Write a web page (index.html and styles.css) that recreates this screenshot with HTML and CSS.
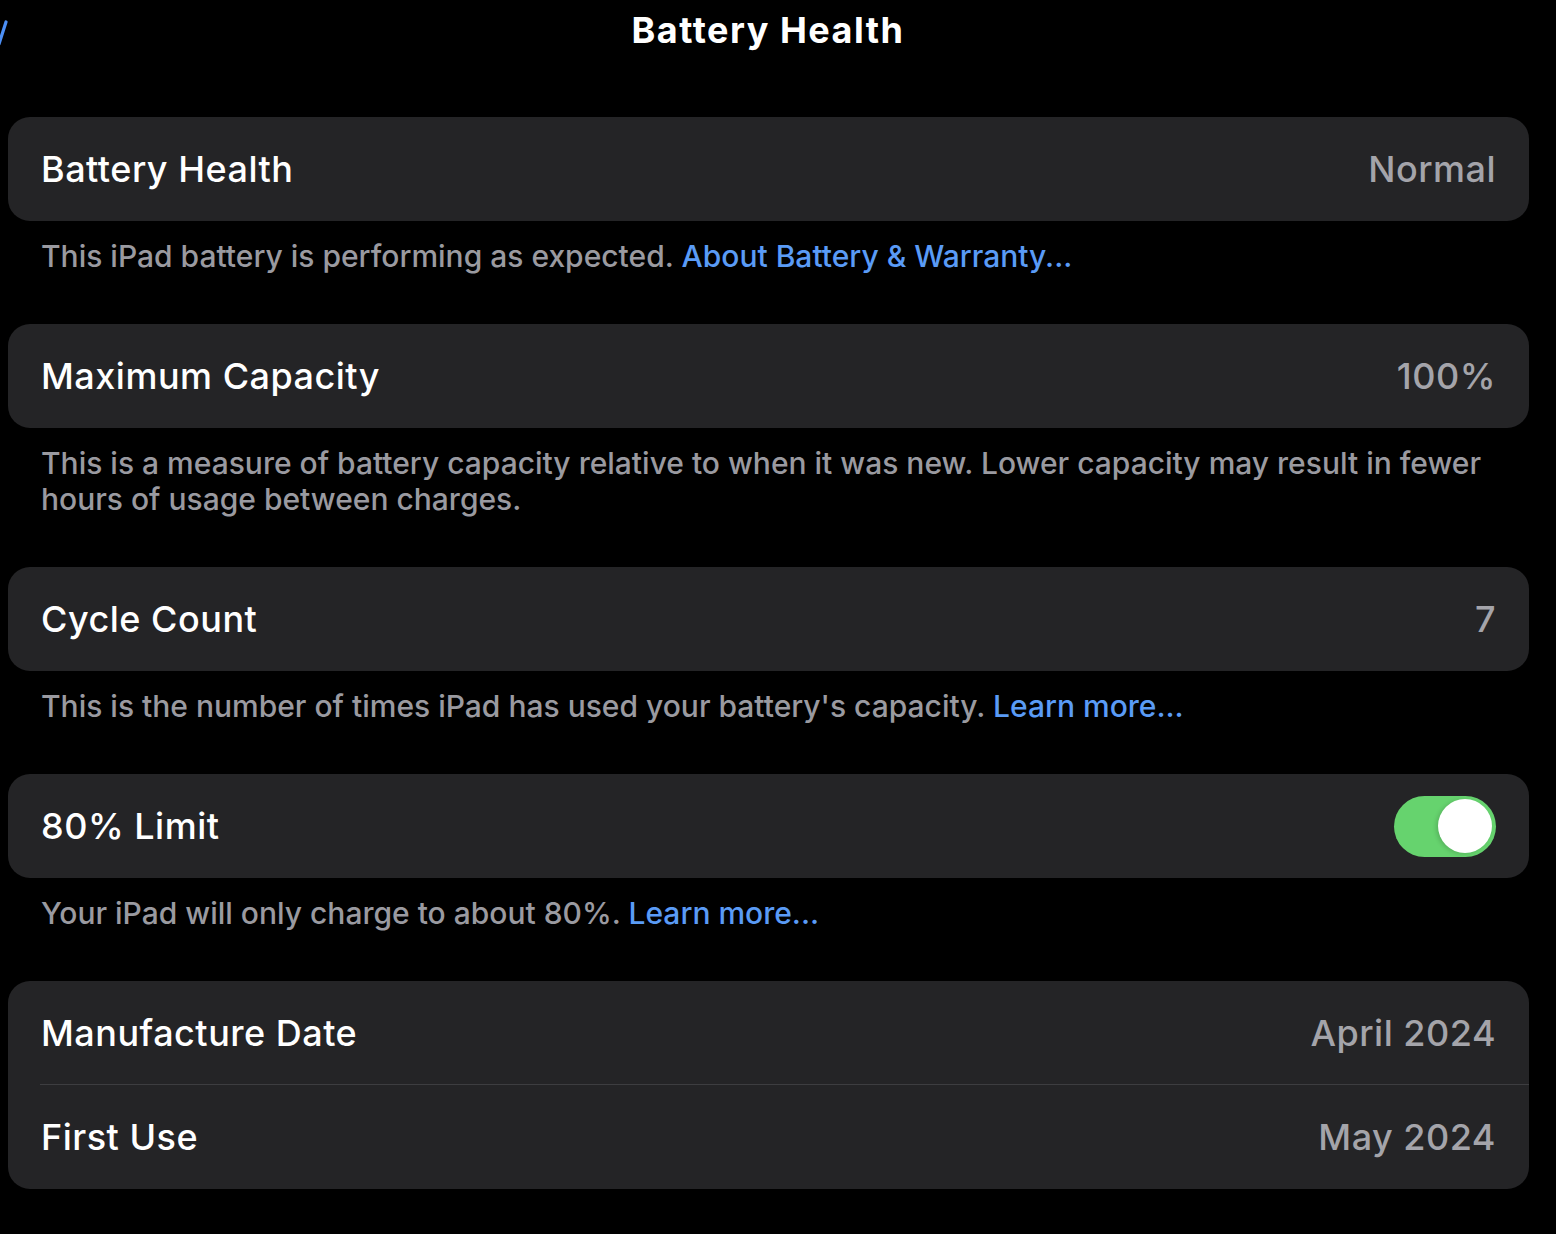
FILE: index.html
```html
<!DOCTYPE html>
<html lang="en">
<head>
  <meta charset="UTF-8">
  <title>Battery Health</title>
  <link rel="stylesheet" href="styles.css">
</head>
<body>

  <div class="barra-topo">
    <div class="voltar">
      <svg width="10" height="26" viewBox="0 0 10 26"><path d="M8 2 L1 24" stroke="#4c8ff5" stroke-width="3.2" stroke-linecap="round" fill="none"/></svg>
    </div>
    <h1>Battery Health</h1>
    <div></div>
  </div>

  <div class="conteudo">
    <div class="grupo">
      <div class="linha">
        <span class="rotulo">Battery Health</span>
        <span class="valor">Normal</span>
      </div>
    </div>
    <p class="rodape">This iPad battery is performing as expected. <a href="#">About Battery &amp; Warranty...</a></p>

    <div class="grupo">
      <div class="linha">
        <span class="rotulo">Maximum Capacity</span>
        <span class="valor">100%</span>
      </div>
    </div>
    <p class="rodape">This is a measure of battery capacity relative to when it was new. Lower capacity may result in fewer hours of usage between charges.</p>

    <div class="grupo">
      <div class="linha">
        <span class="rotulo">Cycle Count</span>
        <span class="valor">7</span>
      </div>
    </div>
    <p class="rodape">This is the number of times iPad has used your battery's capacity. <a href="#">Learn more...</a></p>

    <div class="grupo">
      <div class="linha">
        <span class="rotulo">80% Limit</span>
        <span class="chave ligada"><span class="bolinha"></span></span>
      </div>
    </div>
    <p class="rodape">Your iPad will only charge to about 80%. <a href="#">Learn more...</a></p>

    <div class="grupo">
      <div class="linha">
        <span class="rotulo">Manufacture Date</span>
        <span class="valor">April 2024</span>
      </div>
      <div class="linha">
        <span class="rotulo">First Use</span>
        <span class="valor">May 2024</span>
      </div>
    </div>
  </div>

</body>
</html>
```

FILE: styles.css
```css
* {
  box-sizing: border-box;
  margin: 0;
  padding: 0;
}

body {
  background-color: #000;
  color: #fff;
  font-family: Inter, "Noto Sans", sans-serif;
  width: 1556px;
  min-height: 1234px;
}

.barra-topo {
  display: grid;
  grid-template-columns: 1fr auto 1fr;
  align-items: center;
  width: 1536px;
  height: 117px;
  padding-bottom: 58px;
}

.barra-topo h1 {
  font-size: 36px;
  font-weight: 700;
  letter-spacing: 1.5px;
}

.voltar svg {
  display: block;
  margin-left: -2px;
  margin-top: 6px;
}

.conteudo {
  padding: 0 27px 0 8px;
}

.grupo {
  background-color: #242426;
  border-radius: 22px;
  overflow: hidden;
}

.linha {
  display: flex;
  align-items: center;
  justify-content: space-between;
  height: 104px;
  padding: 0 33px;
  position: relative;
}

.linha + .linha::before {
  content: "";
  position: absolute;
  left: 32px;
  right: 0;
  top: -1px;
  height: 1px;
  background-color: #3d3d40;
}

.rotulo {
  font-size: 36px;
  font-weight: 500;
  letter-spacing: 0.5px;
}

.valor {
  font-size: 36px;
  font-weight: 500;
  color: #a4a4aa;
  letter-spacing: 0.5px;
}

.rodape {
  font-size: 30px;
  font-weight: 500;
  line-height: 36px;
  color: #9a9aa0;
  padding: 17px 40px 50px 33px;
}

.rodape a {
  color: #5a9bf6;
  text-decoration: none;
}

.chave {
  width: 102px;
  height: 61px;
  border-radius: 31px;
  background-color: #39393d;
  display: flex;
  align-items: center;
  padding: 0 4px;
}

.chave.ligada {
  background-color: #66d36e;
  justify-content: flex-end;
}

.bolinha {
  width: 54px;
  height: 54px;
  border-radius: 50%;
  background-color: #fff;
  box-shadow: -2px 1px 4px rgba(0, 0, 0, 0.15);
}
```
